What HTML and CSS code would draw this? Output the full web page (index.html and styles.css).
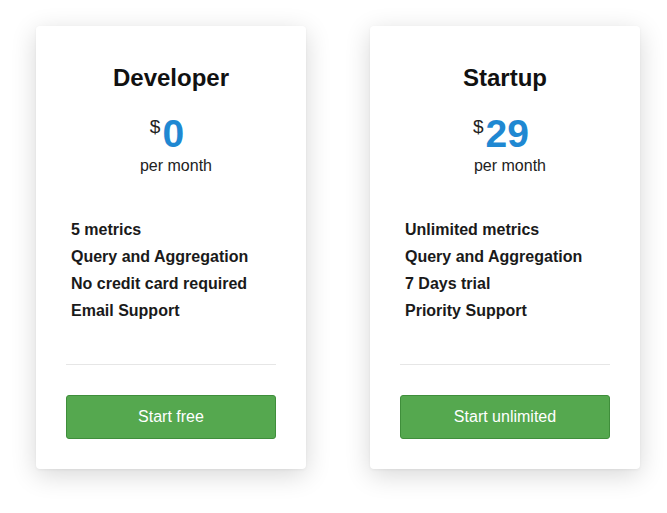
FILE: index.html
```html
<!DOCTYPE html>
<html>
<head>
<meta charset="utf-8">
<link rel="stylesheet" href="styles.css">
</head>
<body>
<div class="plans">
  <div class="card">
    <h2 class="title">Developer</h2>
    <div class="price"><span class="cur">$</span><span class="amount">0</span></div>
    <div class="period">per month</div>
    <ul class="features">
      <li>5 metrics</li>
      <li>Query and Aggregation</li>
      <li>No credit card required</li>
      <li>Email Support</li>
    </ul>
    <hr class="divider">
    <button class="btn">Start free</button>
  </div>
  <div class="card">
    <h2 class="title">Startup</h2>
    <div class="price"><span class="cur">$</span><span class="amount">29</span></div>
    <div class="period">per month</div>
    <ul class="features">
      <li>Unlimited metrics</li>
      <li>Query and Aggregation</li>
      <li>7 Days trial</li>
      <li>Priority Support</li>
    </ul>
    <hr class="divider">
    <button class="btn">Start unlimited</button>
  </div>
</div>
</body>
</html>
```
FILE: styles.css
```css
html, body {
  margin: 0;
  padding: 0;
  background: #ffffff;
  font-family: "Liberation Sans", Arial, sans-serif;
  color: #111;
}
.plans {
  display: flex;
  gap: 64px;
  padding: 26px 0 40px 36px;
}
.card {
  width: 270px;
  box-sizing: border-box;
  height: 443px;
  background: #fff;
  border-radius: 4px;
  box-shadow: 0 6px 26px rgba(0,0,0,0.16), 0 1px 3px rgba(0,0,0,0.05);
  padding: 38px 30px 30px;
  display: flex;
  flex-direction: column;
}
.title {
  margin: 0;
  text-align: center;
  font-size: 24px;
  line-height: 28px;
  font-weight: bold;
  color: #111;
}
.price {
  margin-top: 19px;
  text-align: center;
  line-height: 46px;
  height: 46px;
}
.cur {
  font-size: 19px;
  vertical-align: top;
  position: relative;
  top: -7px;
  margin-right: 2px;
  color: #222;
}
.amount {
  font-size: 39px;
  font-weight: bold;
  color: #1f88d2;
  margin-right: 8px;
}
.period {
  margin-top: -1px;
  padding-left: 10px;
  text-align: center;
  font-size: 16px;
  line-height: 20px;
  color: #222;
}
.features {
  list-style: none;
  margin: 40px 0 0;
  padding: 0 0 0 5px;
}
.features li {
  font-size: 16px;
  font-weight: bold;
  line-height: 27px;
  color: #1a1a1a;
}
.divider {
  margin: 40px 0 0;
  border: 0;
  border-top: 1px solid #e6e6e6;
  height: 0;
}
.btn {
  margin-top: 30px;
  height: 44px;
  width: 100%;
  background: #55a84f;
  border: 1px solid #3f8e3b;
  border-radius: 3px;
  color: #fff;
  font-family: "Liberation Sans", Arial, sans-serif;
  font-size: 16px;
}
```
